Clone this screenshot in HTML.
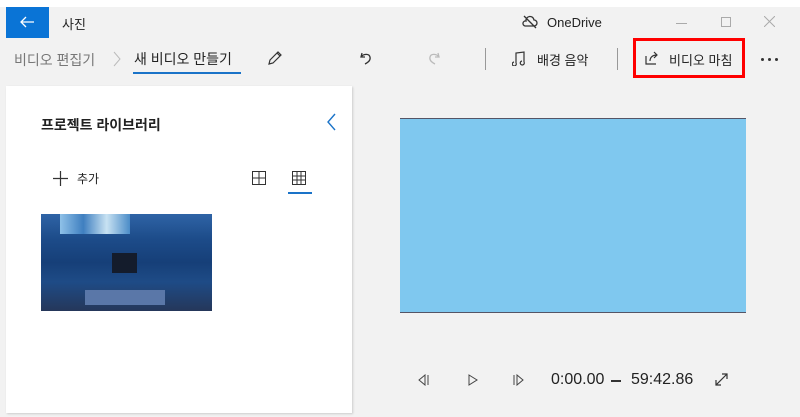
<!DOCTYPE html>
<html><head><meta charset="utf-8"><style>
*{margin:0;padding:0;box-sizing:border-box}
body{width:800px;height:417px;background:#fff;font-family:"Liberation Sans","Noto Sans CJK KR",sans-serif;position:relative;overflow:hidden;color:#222}
.bg{position:absolute;left:0;top:7px;width:800px;height:410px;background:#f2f2f2}
.a{position:absolute}
.t{font-size:13px;white-space:nowrap}
</style></head><body>
<div class="bg"></div>
<div class="a" style="left:6px;top:7px;width:43px;height:31px;background:#0a74d6"></div>
<svg class="a" style="left:19px;top:15px" width="16" height="14" viewBox="0 0 16 14"><path d="M15 7H2 M7 2L2 7l5 5" fill="none" stroke="#fff" stroke-width="1.3"/></svg>
<div class="a t" style="left:62px;top:14px">사진</div>
<svg class="a" style="left:522px;top:15px" width="16" height="14" viewBox="0 0 16 14"><path d="M3 11h9a3 3 0 0 0 0-6 4 4 0 0 0-8 1 2.5 2.5 0 0 0-1 5z M2 1l12 12" fill="none" stroke="#333" stroke-width="1.3"/></svg>
<div class="a t" style="left:547px;top:15px;font-size:13px">OneDrive</div>
<div class="a" style="left:676px;top:23px;width:11px;height:1px;background:#aaa"></div>
<div class="a" style="left:721px;top:17px;width:10px;height:10px;border:1px solid #aaa"></div>
<svg class="a" style="left:764px;top:16px" width="11" height="11"><path d="M0 0l11 11M11 0L0 11" stroke="#aaa" stroke-width="1"/></svg>

<div class="a t" style="left:14px;top:50px;color:#777;font-size:14px">비디오 편집기</div>
<svg class="a" style="left:113px;top:51px" width="8" height="16"><path d="M1 1l6 7-6 7" fill="none" stroke="#bbb"/></svg>
<div class="a t" style="left:134px;top:49px;font-size:14px">새 비디오 만들기</div>
<div class="a" style="left:133px;top:72px;width:108px;height:2px;background:#1a73c8"></div>
<svg class="a" style="left:267px;top:50px" width="16" height="16" viewBox="0 0 16 16"><path d="M2 14l1-4 8-8 3 3-8 8z M10 3l3 3" fill="none" stroke="#333" stroke-width="1.2"/></svg>
<svg class="a" style="left:358px;top:50px" width="16" height="16" viewBox="0 0 16 16"><path d="M4 3L3 7l4 0 M3 7c2-3 8-4 9 0s-3 6-5 7" fill="none" stroke="#333" stroke-width="1.3"/></svg>
<svg class="a" style="left:426px;top:50px" width="16" height="16" viewBox="0 0 16 16"><path d="M12 3l1 4-4 0 M13 7c-2-3-8-4-9 0s3 6 5 7" fill="none" stroke="#bbb" stroke-width="1.3"/></svg>
<div class="a" style="left:485px;top:48px;width:1px;height:22px;background:#999"></div>
<svg class="a" style="left:512px;top:50px" width="14" height="16" viewBox="0 0 14 16"><path d="M4 13V3l8-1v10 M4 13a2 2 0 1 1-2-1 M12 12a2 2 0 1 1-2-1" fill="none" stroke="#333" stroke-width="1.2"/></svg>
<div class="a t" style="left:537px;top:50px">배경 음악</div>
<div class="a" style="left:617px;top:48px;width:1px;height:22px;background:#999"></div>
<div class="a" style="left:633px;top:38px;width:112px;height:40px;border:3px solid #f00"></div>
<svg class="a" style="left:644px;top:50px" width="16" height="16" viewBox="0 0 16 16"><path d="M2 6v8h10 M6 11c0-4 3-6 7-6 M10 2l3 3-3 3" fill="none" stroke="#333" stroke-width="1.2"/></svg>
<div class="a t" style="left:669px;top:50px">비디오 마침</div>
<div class="a" style="left:761px;top:58px;width:3px;height:3px;background:#333;border-radius:50%"></div>
<div class="a" style="left:768px;top:58px;width:3px;height:3px;background:#333;border-radius:50%"></div>
<div class="a" style="left:775px;top:58px;width:3px;height:3px;background:#333;border-radius:50%"></div>

<div class="a" style="left:6px;top:86px;width:346px;height:327px;background:#fff;box-shadow:1px 1px 2px #ccc"></div>
<div class="a t" style="left:41px;top:115px;font-size:14px;font-weight:bold">프로젝트 라이브러리</div>
<svg class="a" style="left:327px;top:113px" width="9" height="18"><path d="M8 1L1 9l7 8" fill="none" stroke="#1a73c8" stroke-width="1.4"/></svg>
<svg class="a" style="left:53px;top:171px" width="15" height="15"><path d="M7.5 0v15M0 7.5h15" stroke="#333" stroke-width="1.2"/></svg>
<div class="a t" style="left:77px;top:170px;font-size:12px">추가</div>
<svg class="a" style="left:252px;top:171px" width="14" height="14"><path d="M.5 .5h13v13H.5z M7 0v14 M0 7h14" fill="none" stroke="#333"/></svg>
<svg class="a" style="left:292px;top:171px" width="14" height="14"><path d="M.5 .5h13v13H.5z M5 0v14 M9 0v14 M0 5h14 M0 9h14" fill="none" stroke="#333"/></svg>
<div class="a" style="left:288px;top:192px;width:24px;height:2px;background:#1a73c8"></div>
<div class="a" style="left:41px;top:214px;width:171px;height:97px;background:linear-gradient(180deg,#2f64a6 0%,#1d4c8a 25%,#163f78 50%,#1e4b86 70%,#25375a 100%)"></div>
<div class="a" style="left:60px;top:214px;width:70px;height:20px;background:linear-gradient(90deg,#8fc1e8,#3f7fc0,#c8e2f2,#4b8cc8)"></div>
<div class="a" style="left:112px;top:253px;width:25px;height:20px;background:#141c2c"></div>
<div class="a" style="left:85px;top:290px;width:80px;height:15px;background:#5a77a8"></div>

<div class="a" style="left:400px;top:118px;width:346px;height:195px;background:#7fc8ef;border-top:1px solid #556;border-bottom:1px solid #556"></div>
<svg class="a" style="left:417px;top:374px" width="12" height="12"><path d="M8 1L2 6l6 5z M11 1v10" fill="none" stroke="#444"/></svg>
<svg class="a" style="left:467px;top:374px" width="12" height="12"><path d="M2 1l8 5-8 5z" fill="none" stroke="#444"/></svg>
<svg class="a" style="left:513px;top:374px" width="12" height="12"><path d="M4 1l6 5-6 5z M1 1v10" fill="none" stroke="#444"/></svg>
<div class="a t" style="left:551px;top:371px;font-size:16px">0:00.00</div>
<div class="a" style="left:611px;top:380px;width:10px;height:2px;background:#333"></div>
<div class="a t" style="left:631px;top:371px;font-size:16px">59:42.86</div>
<svg class="a" style="left:715px;top:373px" width="13" height="13"><path d="M1 12L12 1 M1 7v5h5 M7 1h5v5" fill="none" stroke="#333" stroke-width="1.2"/></svg>
</body></html>
